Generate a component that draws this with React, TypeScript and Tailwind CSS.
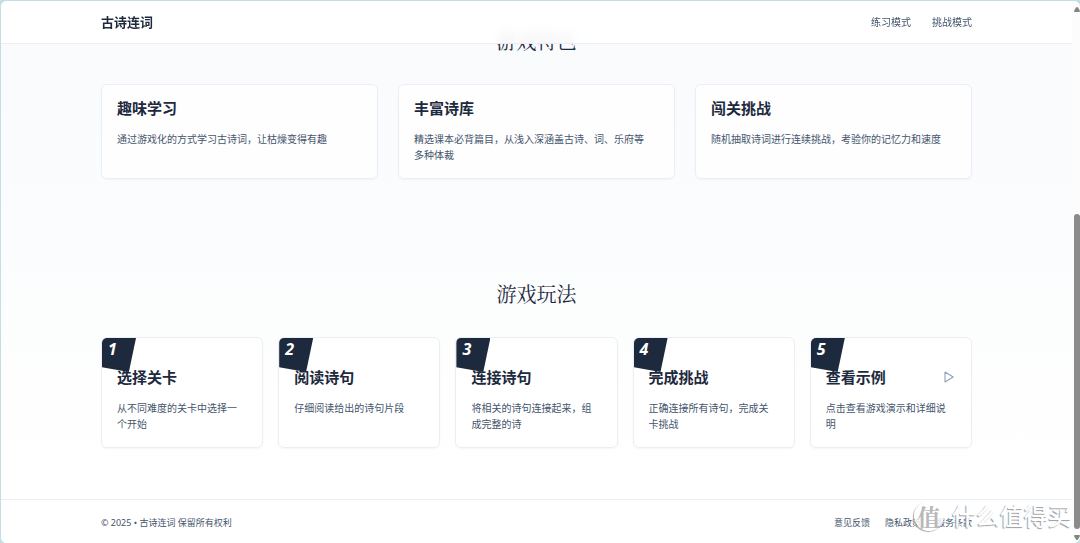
type Feature = { title: string; text: string };
type Step = { title: string; text: string; play?: boolean };

const features: Feature[] = [
  { title: "趣味学习", text: "通过游戏化的方式学习古诗词，让枯燥变得有趣" },
  { title: "丰富诗库", text: "精选课本必背篇目，从浅入深涵盖古诗、词、乐府等多种体裁" },
  { title: "闯关挑战", text: "随机抽取诗词进行连续挑战，考验你的记忆力和速度" },
];

const steps: Step[] = [
  { title: "选择关卡", text: "从不同难度的关卡中选择一个开始" },
  { title: "阅读诗句", text: "仔细阅读给出的诗句片段" },
  { title: "连接诗句", text: "将相关的诗句连接起来，组成完整的诗" },
  { title: "完成挑战", text: "正确连接所有诗句，完成关卡挑战" },
  { title: "查看示例", text: "点击查看游戏演示和详细说明", play: true },
];

const container = "mx-auto w-full max-w-[871px]";
const card = "overflow-hidden rounded-md border border-[#ebeff5] bg-white/75 shadow-[0_1px_2px_rgba(15,23,42,0.04)]";
const cardTitle = "text-[15px] leading-4 font-bold text-slate-800";
const cardText = "text-[10px] leading-4 text-slate-600";
const heading =
  "text-center font-['Noto_Serif_CJK_SC','Noto_Serif_SC',serif] text-[20px] leading-7 font-normal text-slate-800";

function Header() {
  return (
    <header className="absolute inset-x-0 top-0 z-10 border-b border-slate-200/70 bg-white/90 backdrop-blur-xs">
      <div className={`${container} flex h-[42px] items-center justify-between pt-px`}>
        <a href="#home" className="text-[13px] font-bold text-slate-800">古诗连词</a>
        <nav className="flex gap-[21px] text-[10px] text-slate-600">
          <a href="#practice">练习模式</a>
          <a href="#challenge">挑战模式</a>
        </nav>
      </div>
    </header>
  );
}

function StepCard({ step, index }: { step: Step; index: number }) {
  return (
    <li className={`${card} relative px-[15px] pt-[31px] pb-[15px]`}>
      <span className="absolute top-0 left-0 flex h-[34px] w-[34px] bg-slate-800 pl-1.5 font-['Noto_Sans',sans-serif] text-[16px] leading-[22px] font-bold text-white italic [clip-path:polygon(0_0,100%_0,79%_100%,0_86%)]">
        {index + 1}
      </span>
      <div className="relative flex items-center justify-between">
        <h3 className={cardTitle}>{step.title}</h3>
        {step.play && (
          <button type="button" aria-label="播放示例" className="mr-0.5 text-slate-400">
            <svg viewBox="0 0 10 12" className="block h-3 w-2.5" fill="none" stroke="currentColor" strokeWidth="1.1" strokeLinejoin="round">
              <path d="M1 1 L9.2 6 L1 11 Z" />
            </svg>
          </button>
        )}
      </div>
      <p className={`${cardText} mt-[15px] max-w-[126px]`}>{step.text}</p>
    </li>
  );
}

function Scrollbar() {
  return (
    <div aria-hidden="true" className="flex w-2 shrink-0 flex-col items-end bg-[#fcfcfc] pt-1.5 pb-[3px]">
      <svg viewBox="0 0 6 5" className="h-[5px] w-1.5 fill-[#858585]">
        <path d="M2 .5 Q3 -.5 4 .5 L6 4 Q6 5 5 5 H1 Q0 5 0 4 Z" />
      </svg>
      <div className="flex-[202]" />
      <div className="w-1.5 flex-[315] rounded-full bg-[#8b8b8b]" />
      <svg viewBox="0 0 6 5" className="mt-1.5 h-[5px] w-1.5 rotate-180 fill-[#858585]">
        <path d="M2 .5 Q3 -.5 4 .5 L6 4 Q6 5 5 5 H1 Q0 5 0 4 Z" />
      </svg>
    </div>
  );
}

function Watermark() {
  return (
    <div className="pointer-events-none absolute right-2 bottom-[11px] z-20 flex items-center gap-2 whitespace-nowrap text-white [text-shadow:-1px_1px_1px_#9c9c9c]">
      <span className="flex h-[30px] w-[30px] items-center justify-center rounded-full border border-white bg-white/80 font-['Noto_Serif_CJK_SC','Noto_Serif_SC',serif] text-[23px] leading-none font-bold text-[#b8b8b8] shadow-[-1px_1px_1px_#a8a8a8] [text-shadow:none]">
        值
      </span>
      <span className="text-[24px] leading-8 font-medium">什么值得买</span>
    </div>
  );
}

export default function App() {
  return (
    <div
      lang="zh-CN"
      className="relative flex min-h-screen overflow-hidden bg-[#c3dfe4] pt-px pl-px font-['Noto_Sans','Noto_Sans_CJK_SC',sans-serif]"
    >
      <div className="flex min-w-0 flex-1 overflow-hidden rounded-md bg-white">
        <div className="relative flex min-w-0 flex-1 flex-col bg-linear-to-b from-slate-50 to-white to-90%">
          <Header />
          <main className="flex-1 pt-[26px]">
            <section className={container}>
              <h2 className={heading}>游戏特色</h2>
              <ul className="mt-[29px] grid grid-cols-3 gap-5">
                {features.map((f) => (
                  <li key={f.title} className={`${card} p-[15px]`}>
                    <h3 className={cardTitle}>{f.title}</h3>
                    <p className={`${cardText} mt-[15px] max-w-[236px]`}>{f.text}</p>
                  </li>
                ))}
              </ul>
            </section>
            <section className={`${container} pt-[101px] pb-[50px]`}>
              <h2 className={heading}>游戏玩法</h2>
              <ol className="mt-[29px] grid grid-cols-5 gap-[15px]">
                {steps.map((s, i) => (
                  <StepCard key={s.title} step={s} index={i} />
                ))}
              </ol>
            </section>
          </main>
          <footer className="border-t border-slate-200/70 bg-white">
            <div className={`${container} flex h-[43px] items-center justify-between pt-0.5 text-[9px] text-slate-600`}>
              <p>© 2025 • 古诗连词 保留所有权利</p>
              <nav className="flex gap-[15px]">
                <a href="#feedback">意见反馈</a>
                <a href="#privacy">隐私政策</a>
                <a href="#terms">服务条款</a>
              </nav>
            </div>
          </footer>
        </div>
        <Scrollbar />
      </div>
      <Watermark />
    </div>
  );
}
